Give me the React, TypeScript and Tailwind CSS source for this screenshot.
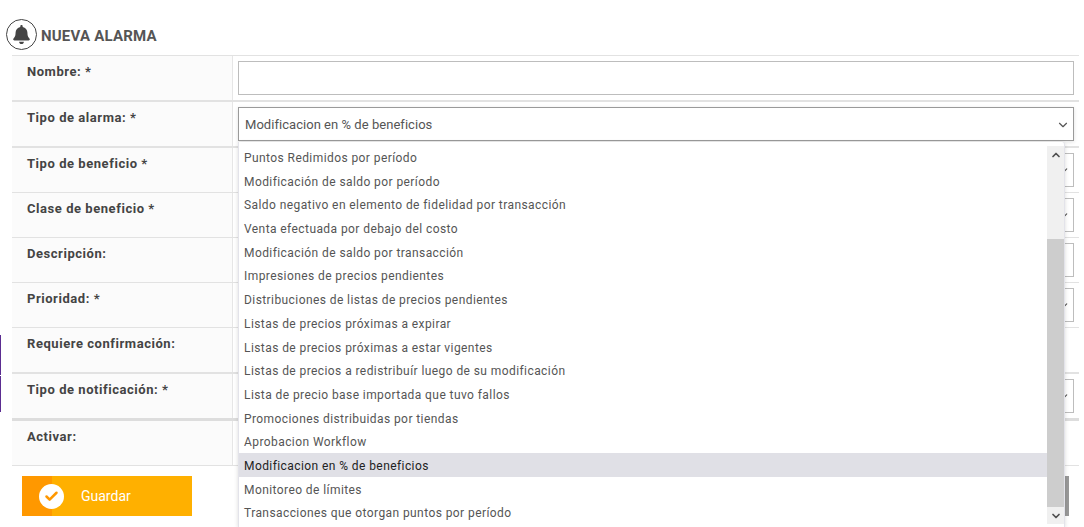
import { Check, ChevronDown, ChevronUp } from 'lucide-react'
import { FaBell } from 'react-icons/fa'

const options = [
  'Puntos Redimidos por período',
  'Modificación de saldo por período',
  'Saldo negativo en elemento de fidelidad por transacción',
  'Venta efectuada por debajo del costo',
  'Modificación de saldo por transacción',
  'Impresiones de precios pendientes',
  'Distribuciones de listas de precios pendientes',
  'Listas de precios próximas a expirar',
  'Listas de precios próximas a estar vigentes',
  'Listas de precios a redistribuír luego de su modificación',
  'Lista de precio base importada que tuvo fallos',
  'Promociones distribuidas por tiendas',
  'Aprobacion Workflow',
  'Modificacion en % de beneficios',
  'Monitoreo de límites',
  'Transacciones que otorgan puntos por período',
]

const selected = 'Modificacion en % de beneficios'

function Row({ label, height, thick, children }: { label: string; height: string; thick?: string; children?: React.ReactNode }) {
  return (
    <div className={`flex ${height} ${thick ?? 'border-b border-[#e2e2e2]'}`}>
      <div className="w-[221px] shrink-0 border-r border-[#e6e6e6] bg-[#fbfbfb] pl-[15px] pt-[7px] text-[13px] leading-[18px] font-bold tracking-[0.55px] text-[#444444]">
        {label}
      </div>
      <div className="flex-1 pl-[5px] pt-[5px]">{children}</div>
    </div>
  )
}

function Field({ arrow }: { arrow?: boolean }) {
  return (
    <div className="flex h-[34px] w-[836px] items-center justify-end border border-[#bdbdbd] bg-white pr-[3px]">
      {arrow && <ChevronDown size={13} strokeWidth={2} color="#555555" />}
    </div>
  )
}

export default function App() {
  return (
    <div className="relative h-[527px] w-[1084px] overflow-hidden bg-white font-['Roboto',sans-serif]">
      <div className="flex h-[55px] items-end pb-[5px] pl-[6px]">
        <span className="flex h-[31px] w-[31px] items-center justify-center rounded-full border border-[#444444]">
          <FaBell size={19} color="#444444" />
        </span>
        <h1 className="mb-[4px] ml-[4px] text-[15px] leading-[20px] font-bold tracking-[0.2px] text-[#555555]">NUEVA ALARMA</h1>
      </div>

      <div className="ml-[12px] mr-[5px] border-t border-[#e2e2e2]">
        <Row label="Nombre: *" height="h-[46px]" thick="border-b-2 border-[#e2e2e2]">
          <Field />
        </Row>
        <Row label="Tipo de alarma: *" height="h-[46px]" thick="border-b-2 border-[#e2e2e2]">
          <div className="flex h-[34px] w-[836px] items-center justify-between border border-[#9a9a9a] bg-white pl-[6px] pr-[3px] pt-[2px] text-[13px] tracking-[0.04px] text-[#555555] shadow-[0_1px_4px_rgba(0,0,0,0.12)]">
            {selected}
            <ChevronDown size={14} strokeWidth={2} color="#555555" />
          </div>
        </Row>
        <Row label="Tipo de beneficio *" height="h-[45px]">
          <Field arrow />
        </Row>
        <Row label="Clase de beneficio *" height="h-[45px]">
          <Field arrow />
        </Row>
        <Row label="Descripción:" height="h-[45px]">
          <Field />
        </Row>
        <Row label="Prioridad: *" height="h-[45px]">
          <Field arrow />
        </Row>
        <Row label="Requiere confirmación:" height="h-[46px]" thick="border-b-2 border-[#e2e2e2]" />
        <Row label="Tipo de notificación: *" height="h-[47px]" thick="border-b-[3px] border-[#dddddd]">
          <Field arrow />
        </Row>
        <Row label="Activar:" height="h-[45px]" />
      </div>

      <button className="absolute left-[22px] top-[476px] flex h-[40px] w-[170px] items-center bg-[#ffb000] text-[14px] text-white">
        <span className="flex h-full w-[30px] shrink-0 bg-[#ff9800]" />
        <span className="absolute left-[17px] flex h-[25px] w-[25px] items-center justify-center rounded-full bg-white">
          <Check size={15} strokeWidth={4} color="#ff9800" />
        </span>
        <span className="ml-[29px]">Guardar</span>
      </button>

      <div className="absolute left-0 top-[335px] h-[40px] w-px bg-[#5b2d91]" />
      <div className="absolute left-0 top-[376px] h-[36px] w-px bg-[#5b2d91]" />
      <div className="absolute left-[1065px] top-[476px] h-[40px] w-[4px] bg-[#999999]" />

      <div className="absolute left-[238px] top-[142px] flex h-[385px] w-[827px] rounded-tr-[3px] border-r border-l border-[#e3e3ea] bg-white shadow-[0_1px_4px_rgba(0,0,0,0.15)]">
        <ul className="flex-1 pt-[3px] text-[12px] tracking-[0.42px] text-[#555555]">
          {options.map((o) => (
            <li
              key={o}
              className={`h-[23.7px] pl-[5px] leading-[26.6px] ${o === selected ? 'bg-[#e0e0e6] text-[#222222]' : ''}`}
            >
              {o}
            </li>
          ))}
        </ul>
        <div className="mt-[4px] flex h-[378px] w-[17px] flex-col bg-[#f0f0f0]">
          <div className="flex h-[17px] items-center justify-center">
            <ChevronUp size={12} strokeWidth={3.5} color="#505050" />
          </div>
          <div className="mt-[76px] h-[268px] bg-[#cdcdcd]" />
          <div className="flex h-[17px] items-center justify-center">
            <ChevronDown size={12} strokeWidth={3.5} color="#505050" />
          </div>
        </div>
      </div>
    </div>
  )
}
